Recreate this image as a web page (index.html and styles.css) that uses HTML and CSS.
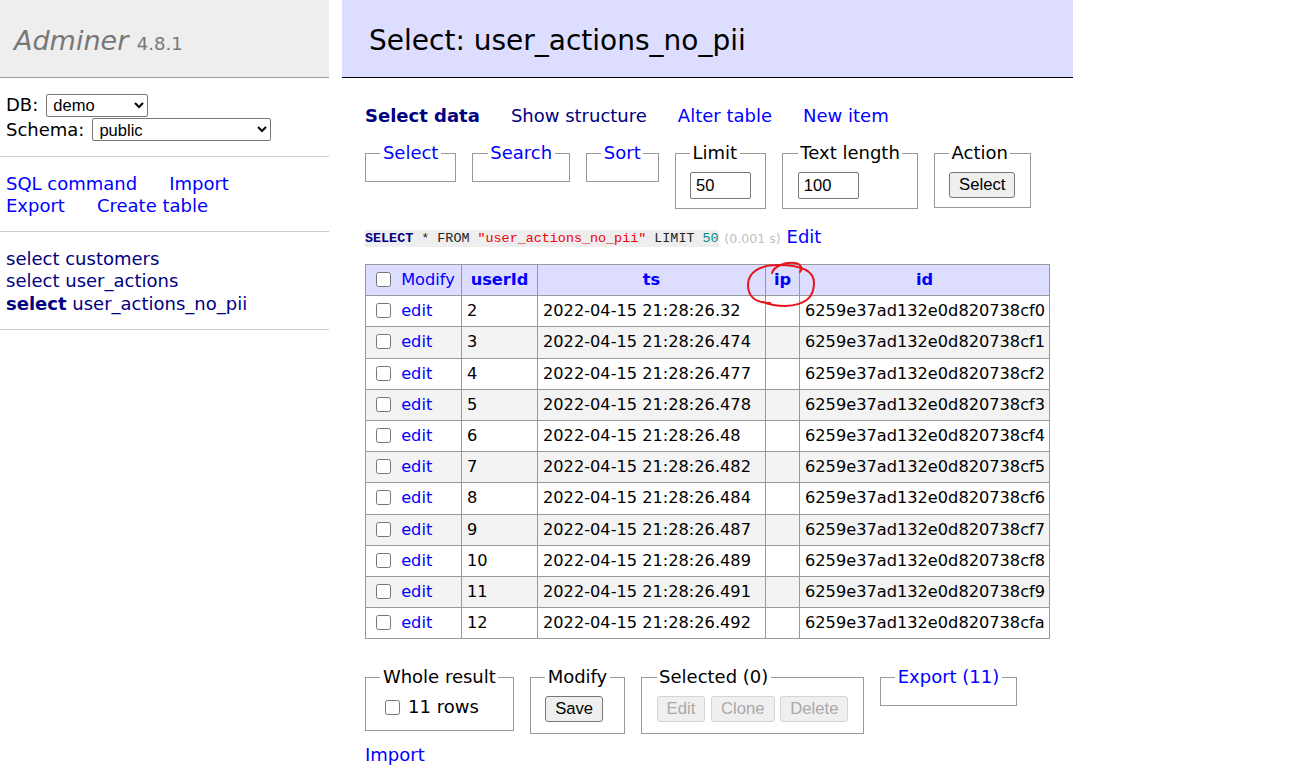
FILE: index.html
```html
<!DOCTYPE html>
<html lang="en">
<head>
<meta charset="utf-8">
<title>Select: user_actions_no_pii - Adminer</title>
<link rel="stylesheet" href="styles.css">
</head>
<body>
<div class="layout">
  <aside class="menu">
    <h1><a class="brand" href="#">Adminer</a> <span class="version">4.8.1</span></h1>
    <form class="dbs">
      <div class="dbrow"><span>DB:</span><select class="sel sel-db"><option>demo</option></select></div>
      <div class="dbrow"><span>Schema:</span><select class="sel sel-schema"><option>public</option></select></div>
    </form>
    <div class="side-links">
      <div class="line"><a href="#">SQL command</a><a href="#">Import</a></div>
      <div class="line"><a href="#">Export</a><a href="#">Create table</a></div>
    </div>
    <ul class="tables">
      <li><a class="v" href="#">select</a> <a class="v" href="#">customers</a></li>
      <li><a class="v" href="#">select</a> <a class="v" href="#">user_actions</a></li>
      <li><a class="v active" href="#">select</a> <a class="v" href="#">user_actions_no_pii</a></li>
    </ul>
  </aside>

  <main class="content">
    <h2>Select: user_actions_no_pii</h2>
    <nav class="tabs">
      <a class="v active" href="#">Select data</a>
      <a class="v" href="#">Show structure</a>
      <a href="#">Alter table</a>
      <a href="#">New item</a>
    </nav>

    <form class="controls">
      <fieldset class="fs"><legend><a href="#">Select</a></legend></fieldset>
      <fieldset class="fs"><legend><a href="#">Search</a></legend></fieldset>
      <fieldset class="fs"><legend><a href="#">Sort</a></legend></fieldset>
      <fieldset class="fs"><legend>Limit</legend><input class="txt" type="text" value="50"></fieldset>
      <fieldset class="fs"><legend>Text length</legend><input class="txt" type="text" value="100"></fieldset>
      <fieldset class="fs"><legend>Action</legend><button class="btn" type="button">Select</button></fieldset>
    </form>

    <p class="query"><code class="sql"><a class="kw" href="#">SELECT</a> * FROM <span class="quo">"user_actions_no_pii"</span> LIMIT <span class="num">50</span></code> <span class="time">(0.001 s)</span> <a href="#">Edit</a></p>

    <div class="table-wrap">
      <table class="data">
        <colgroup>
          <col class="c-mod"><col class="c-uid"><col class="c-ts"><col class="c-ip"><col class="c-id">
        </colgroup>
        <thead>
          <tr>
            <td class="mod"><input class="cb" type="checkbox"> <a href="#">Modify</a></td>
            <th><a href="#">userId</a></th>
            <th><a href="#">ts</a></th>
            <th><a href="#">ip</a></th>
            <th><a href="#">id</a></th>
          </tr>
        </thead>
        <tbody>
          <tr><td class="mod"><input class="cb" type="checkbox"> <a href="#">edit</a></td><td>2</td><td>2022-04-15 21:28:26.32</td><td></td><td>6259e37ad132e0d820738cf0</td></tr>
          <tr><td class="mod"><input class="cb" type="checkbox"> <a href="#">edit</a></td><td>3</td><td>2022-04-15 21:28:26.474</td><td></td><td>6259e37ad132e0d820738cf1</td></tr>
          <tr><td class="mod"><input class="cb" type="checkbox"> <a href="#">edit</a></td><td>4</td><td>2022-04-15 21:28:26.477</td><td></td><td>6259e37ad132e0d820738cf2</td></tr>
          <tr><td class="mod"><input class="cb" type="checkbox"> <a href="#">edit</a></td><td>5</td><td>2022-04-15 21:28:26.478</td><td></td><td>6259e37ad132e0d820738cf3</td></tr>
          <tr><td class="mod"><input class="cb" type="checkbox"> <a href="#">edit</a></td><td>6</td><td>2022-04-15 21:28:26.48</td><td></td><td>6259e37ad132e0d820738cf4</td></tr>
          <tr><td class="mod"><input class="cb" type="checkbox"> <a href="#">edit</a></td><td>7</td><td>2022-04-15 21:28:26.482</td><td></td><td>6259e37ad132e0d820738cf5</td></tr>
          <tr><td class="mod"><input class="cb" type="checkbox"> <a href="#">edit</a></td><td>8</td><td>2022-04-15 21:28:26.484</td><td></td><td>6259e37ad132e0d820738cf6</td></tr>
          <tr><td class="mod"><input class="cb" type="checkbox"> <a href="#">edit</a></td><td>9</td><td>2022-04-15 21:28:26.487</td><td></td><td>6259e37ad132e0d820738cf7</td></tr>
          <tr><td class="mod"><input class="cb" type="checkbox"> <a href="#">edit</a></td><td>10</td><td>2022-04-15 21:28:26.489</td><td></td><td>6259e37ad132e0d820738cf8</td></tr>
          <tr><td class="mod"><input class="cb" type="checkbox"> <a href="#">edit</a></td><td>11</td><td>2022-04-15 21:28:26.491</td><td></td><td>6259e37ad132e0d820738cf9</td></tr>
          <tr><td class="mod"><input class="cb" type="checkbox"> <a href="#">edit</a></td><td>12</td><td>2022-04-15 21:28:26.492</td><td></td><td>6259e37ad132e0d820738cfa</td></tr>
        </tbody>
      </table>
      <svg class="mark" width="80" height="56" viewBox="0 0 80 56" aria-hidden="true">
        <path d="M30 45 C14 45 8 37 8 27 C8 14 20 7 38 7 C60 7 74 12 74 25 C74 40 65 47 45 48 C35 48 28 46 23 44" />
        <path d="M32 15 C34 8 45 4 55 5 C61 6 63 10 60 14" />
      </svg>
    </div>

    <form class="footer">
      <fieldset class="fs fs-body"><legend>Whole result</legend><label class="all"><input class="cb" type="checkbox"> 11 rows</label></fieldset>
      <fieldset class="fs fs-body"><legend>Modify</legend><button class="btn" type="button">Save</button></fieldset>
      <fieldset class="fs fs-body"><legend>Selected (0)</legend><button class="btn" type="button" disabled>Edit</button> <button class="btn" type="button" disabled>Clone</button> <button class="btn" type="button" disabled>Delete</button></fieldset>
      <fieldset class="fs"><legend><a href="#">Export (11)</a></legend></fieldset>
    </form>

    <p class="import"><a href="#">Import</a></p>
  </main>
</div>
</body>
</html>
```

FILE: styles.css
```css
html, body {
  margin: 0;
  padding: 0;
  background: #fff;
}

body {
  font: 18px/22.5px "DejaVu Sans", Verdana, sans-serif;
  color: #000;
}

a {
  color: #00f;
  text-decoration: none;
}

a.v {
  color: #000080;
}

a.active {
  font-weight: bold;
}

.layout {
  display: flex;
  align-items: flex-start;
}

/* ---------- sidebar ---------- */
.menu {
  width: 329px;
  flex: none;
}

.menu h1 {
  margin: 0;
  height: 77px;
  padding: 0 14px;
  border-bottom: 1px solid #999;
  background: #eee;
  font-weight: normal;
  font-size: 27px;
  line-height: 82px;
  white-space: nowrap;
  overflow: hidden;
}

.brand {
  color: #777;
  font-style: italic;
}

.version {
  color: #777;
  font-size: 18px;
}

.dbs {
  margin: 0;
  padding: 15px 6px 14.4px;
  border-bottom: 1px solid #ccc;
}

.dbrow {
  display: flex;
  align-items: center;
  gap: 8px;
  height: 24.5px;
}

.sel {
  font: 16.5px "Liberation Sans", Arial, sans-serif;
  height: 23px;
  margin: 0;
  padding: 0 2px;
  border: 1px solid #767676;
  border-radius: 2px;
  background: #fff;
  color: #000;
}

.sel-db {
  width: 102px;
}

.sel-schema {
  width: 179px;
}

.side-links {
  padding: 15.5px 6px 13.5px;
  border-bottom: 1px solid #ccc;
}

.side-links .line {
  display: flex;
  gap: 32px;
}

.tables {
  list-style: none;
  margin: 0;
  padding: 15.5px 6px 13.5px;
  border-bottom: 1px solid #ccc;
}

/* ---------- main ---------- */
.content {
  box-sizing: border-box;
  margin-left: 13px;
  width: 731px;
  flex: none;
  padding: 0 0 20px 23px;
}

.content h2 {
  margin: 0 0 27px -23px;
  height: 77px;
  padding: 0 27px;
  border-bottom: 1px solid #000;
  background: #ddf;
  font-weight: normal;
  font-size: 28px;
  line-height: 82px;
  white-space: nowrap;
}

.tabs {
  display: flex;
  gap: 31px;
  height: 22.5px;
}

.controls,
.footer {
  display: flex;
  align-items: flex-start;
  gap: 16px;
}

.controls {
  margin: 14.5px 0 0;
}

.fs {
  margin: 0;
  padding: 7px 14.4px 9px;
  border: 1px solid #999;
  min-inline-size: 0;
}

.fs legend {
  padding: 0 2.5px;
  line-height: 22.5px;
}

.txt {
  box-sizing: border-box;
  display: block;
  width: 61px;
  height: 27px;
  margin: 0;
  padding: 1px 5px;
  border: 1px solid #767676;
  border-radius: 2px;
  font: 16.5px "Liberation Sans", Arial, sans-serif;
  color: #000;
  background: #fff;
}

.btn {
  box-sizing: border-box;
  height: 26px;
  margin: 0;
  padding: 0 9px;
  border: 1px solid #767676;
  border-radius: 3px;
  background: #efefef;
  color: #000;
  font: 16.67px "Liberation Sans", Arial, sans-serif;
  vertical-align: middle;
}

.btn[disabled] {
  color: #a9a9a9;
  border-color: #d4d4d4;
  background: #efefef;
}

.query {
  margin: 17px 0 0;
  height: 22.5px;
  white-space: nowrap;
}

.sql {
  font: 13.4px/17px "Liberation Mono", "DejaVu Sans Mono", monospace;
  background: #eee;
  color: #222;
  display: inline-block;
  vertical-align: 1px;
}

.sql .kw {
  color: #000080;
  font-weight: bold;
}

.sql .quo {
  color: #e00;
}

.sql .num {
  color: #008b8b;
}

.time {
  color: #c0c0c0;
  font-size: 12.6px;
}

/* ---------- table ---------- */
.table-wrap {
  position: relative;
  width: 684px;
  margin-top: 16px;
}

.data {
  width: 684px;
  table-layout: fixed;
  border-collapse: collapse;
  font-size: 16.2px;
}

.c-mod { width: 96px; }
.c-uid { width: 76px; }
.c-ts { width: 228px; }
.c-ip { width: 34px; }
.c-id { width: 250px; }

.data td,
.data th {
  border: 1px solid #999;
  padding: 3px 5px;
  line-height: 24.2px;
  white-space: nowrap;
  overflow: hidden;
  text-align: left;
}

.data thead td,
.data thead th {
  background: #ddf;
}

.data thead th {
  text-align: center;
  font-weight: bold;
}

.data tbody tr:nth-child(even) td {
  background: #f3f3f3;
}

.cb {
  width: 15px;
  height: 15px;
  margin: 0 5px 0 5px;
  vertical-align: -2px;
}

.mark {
  position: absolute;
  left: 375px;
  top: -6px;
  fill: none;
  stroke: #e8141b;
  stroke-width: 2;
  stroke-linecap: round;
  pointer-events: none;
}

/* ---------- footer ---------- */
.footer {
  margin-top: 27px;
}

.footer .fs-body {
  padding-bottom: 11px;
}

.all {
  display: block;
  height: 23.5px;
}

.all .cb {
  margin-left: 5px;
  margin-right: 2px;
}

.import {
  margin: 10px 0 0;
}
```
